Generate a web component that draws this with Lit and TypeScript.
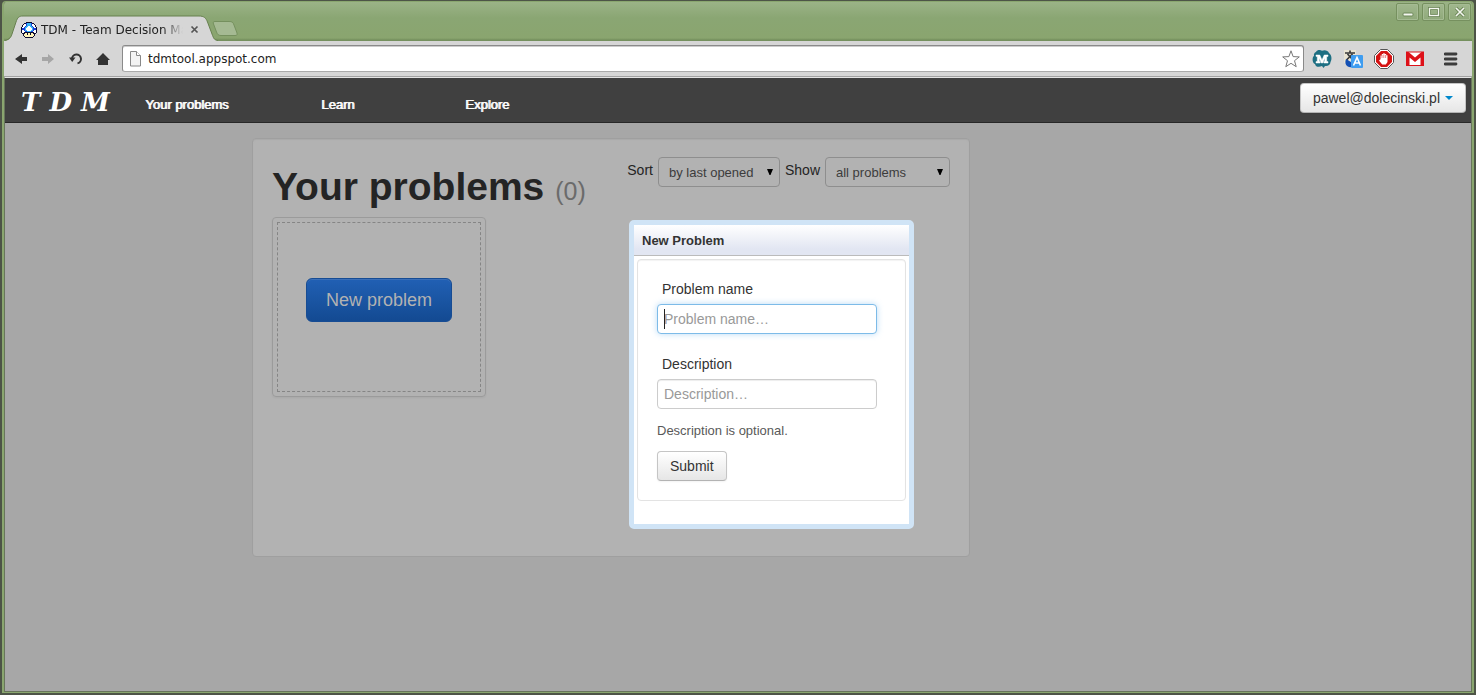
import { LitElement, html, css, svg } from "lit";
import { customElement } from "lit/decorators.js";

const MUSHROOM = [
  ".....KKKKKK.....",
  "...KKBCCCCBKK...",
  "..KWWBCCCCBWWK..",
  ".KWWWBCCCCBWWWK.",
  ".KWWBCCWWCCBWWK.",
  "KWWBCCWWWWCCBWWK",
  "KBBBCWWWWWWCBBBK",
  "KBBBCWWWWWWCBBBK",
  "KWWBCCWWWWCCBWWK",
  "KWWWBBCCCCBBWWWK",
  "KWWKKKKKKKKKKWWK",
  ".KKKYYKYYKYYKKK.",
  "..KYYYKYYKYYYK..",
  "..KYYYYYYYYYYK..",
  "...KYYYYYYYYK...",
  "....KKKKKKKK....",
];
const MUSHROOM_COLORS: Record<string, string> = {
  K: "#0c0c30",
  B: "#1a3cd8",
  C: "#35b4f4",
  W: "#ffffff",
  Y: "#fdf3b8",
};

@customElement("browser-chrome")
class BrowserChrome extends LitElement {
  static styles = css`
    :host {
      display: block;
      font: 12px/18px "DejaVu Sans", sans-serif;
      color: #222;
    }
    button {
      font: inherit;
      border: 0;
      padding: 0;
      margin: 0;
      background: none;
      display: grid;
      place-items: center;
    }
    svg { display: block; }
    .titlebar {
      height: 38px;
      display: flex;
      align-items: flex-start;
      justify-content: space-between;
      padding: 0 1px 0 2px;
      background: linear-gradient(#9bb387, #8aa673 16px, #8aa56f 36px, #75905e);
    }
    .tabs { display: flex; padding-top: 13px; }
    .tab { display: grid; grid-template-columns: 100%; width: 207px; height: 26px; }
    .tab > * { grid-area: 1 / 1; }
    .tab-row { display: flex; align-items: center; gap: 4px; padding: 3px 14px 0 15px; }
    .tab-title {
      flex: 1;
      min-width: 0;
      height: 18px;
      overflow: hidden;
      white-space: nowrap;
      mask-image: linear-gradient(90deg, #000 122px, transparent 142px);
    }
    .new-tab { padding-top: 5px; margin-left: -1px; align-self: flex-start; }
    .win { display: flex; gap: 3px; padding-top: 1px; }
    .win button {
      width: 23px;
      height: 18px;
      border: 1px solid #76905f;
      border-radius: 2px;
      background: linear-gradient(#a1b88e, #8fa97a);
      box-shadow: inset 0 0 0 1px #a5bb93;
    }
    .toolbar {
      height: 35px;
      display: flex;
      align-items: center;
      padding: 0 13px 0 10px;
      border-top: 1px solid #75905e;
      background: #d6d6d6;
      border-bottom: 1px solid #a2a2a2;
    }
    .tools { display: flex; gap: 11px; margin-right: 11px; }
    .tools button { width: 16px; height: 16px; }
    .address {
      flex: 1;
      display: flex;
      align-items: center;
      gap: 6px;
      height: 25px;
      padding: 0 3px 0 6px;
      border: 1px solid #8a8a8a;
      border-bottom-color: #aaa;
      border-radius: 3px;
      background: #fff;
      box-shadow: inset 0 1px 0 #ccc;
    }
    .address input {
      flex: 1;
      min-width: 0;
      border: 0;
      padding: 0;
      outline: 0;
      background: none;
      font: inherit;
      color: #222;
    }
    .ext { display: flex; gap: 11px; margin-left: 8px; }
    .ext button { width: 20px; height: 20px; }
    .ext .menu { width: 16px; margin-left: 7px; }
  `;

  render() {
    return html`
      <div class="titlebar">
        <div class="tabs">
          <div class="tab">
            <svg width="212" height="26" viewBox="0 0 212 26" overflow="visible">
              <path d="M-1 26 C4 25 5 22 6 19 L10 7 C11.500 2.500 13 1 17 1 H193 C198 1 200 3 201.500 7 L206 19 C207.500 23 208 25 212 26 Z" fill="#d6d6d6" />
              <path d="M-1 25.500 C4 24 5 22 6 19 L10 7 C11.500 2.500 13 1 17 1 H193 C198 1 200 3 201.500 7 L206 19 C207.500 23 208 25 212 25.500" fill="none" stroke="#67804f" />
            </svg>
            <div class="tab-row">
              <svg width="16" height="16" viewBox="0 0 16 16" shape-rendering="crispEdges">
                ${MUSHROOM.flatMap((row, y) =>
                  [...row].map((c, x) =>
                    c === "." ? null : svg`<rect x=${x} y=${y} width="1" height="1" fill=${MUSHROOM_COLORS[c]} />`
                  )
                )}
              </svg>
              <span class="tab-title">TDM - Team Decision Making</span>
              <button aria-label="Close tab">
                <svg width="9" height="9" viewBox="0 0 9 9"><path d="M1.500 1.500 L7.500 7.500 M7.500 1.500 L1.500 7.500" stroke="#555" stroke-width="1.700" /></svg>
              </button>
            </div>
          </div>
          <button class="new-tab" aria-label="New tab">
            <svg width="27" height="17" viewBox="0 0 27 17">
              <path d="M3 1.500 H17 C20 1.500 21 2 22 5 L25 13 C25.500 15 25 15.500 23 15.500 H9 C6.500 15.500 5.500 14.500 4.500 12 L1.500 4 C1 2.500 1 1.500 3 1.500 Z" fill="#a5ba93" stroke="#75905e" />
            </svg>
          </button>
        </div>
        <div class="win">
          <button aria-label="Minimize">
            <svg width="12" height="12" viewBox="0 0 12 12"><rect x="1" y="7" width="10" height="3" rx="1" fill="#f4f7f0" stroke="#6d8759" /></svg>
          </button>
          <button aria-label="Maximize">
            <svg width="12" height="12" viewBox="0 0 12 12"><rect x="1.500" y="2.500" width="9" height="7" fill="none" stroke="#6d8759" stroke-width="3" /><rect x="1.500" y="2.500" width="9" height="7" fill="none" stroke="#f4f7f0" stroke-width="1.300" /></svg>
          </button>
          <button aria-label="Close">
            <svg width="12" height="12" viewBox="0 0 12 12"><path d="M2 2 L10 10 M10 2 L2 10" stroke="#6d8759" stroke-width="3.200" /><path d="M2 2 L10 10 M10 2 L2 10" stroke="#f4f7f0" stroke-width="1.600" /></svg>
          </button>
        </div>
      </div>
      <div class="toolbar">
        <div class="tools">
          <button aria-label="Back">
            <svg width="16" height="16" viewBox="0 0 16 16"><path d="M1 8 L8 3 V6 H13 V10 H8 V13 Z" fill="#333" /></svg>
          </button>
          <button aria-label="Forward">
            <svg width="16" height="16" viewBox="0 0 16 16"><path d="M13 8 L7 3 V6 H1 V10 H7 V13 Z" fill="#a6a6a6" /></svg>
          </button>
          <button aria-label="Reload">
            <svg width="16" height="16" viewBox="0 0 16 16"><path d="M4 8 A4.500 4.500 0 1 1 9.500 12.400" fill="none" stroke="#333" stroke-width="2" /><path d="M1 6.500 H7.500 L4.200 11 Z" fill="#333" /></svg>
          </button>
          <button aria-label="Home">
            <svg width="16" height="16" viewBox="0 0 16 16"><path d="M8 2 L15 9 H13 V14 H3 V9 H1 Z" fill="#333" /></svg>
          </button>
        </div>
        <div class="address">
          <svg width="13" height="16" viewBox="0 0 13 16"><path d="M1.500 .5 H7.500 L11.500 4.500 V15 H1.500 Z" fill="#f3f3f3" stroke="#888" /><path d="M7.500 .5 V4.500 H11.500" fill="#fff" stroke="#888" /></svg>
          <input aria-label="Address" .value=${"tdmtool.appspot.com"} />
          <button aria-label="Bookmark this page">
            <svg width="18" height="18" viewBox="0 0 18 18"><path d="M9 .8 L11.100 6.600 L17.300 6.900 L12.500 10.700 L14.200 16.700 L9 13.300 L3.800 16.700 L5.500 10.700 L.7 6.900 L6.900 6.600 Z" fill="#fff" stroke="#777" stroke-linejoin="round" /></svg>
          </button>
        </div>
        <div class="ext">
          <button aria-label="Mindmap extension">
            <svg width="20" height="20" viewBox="0 0 20 20">
              <path d="M4 3 C5 1 8 .5 10 1.800 C12 .5 16 1 17 4 C20 6 20 11 18.500 13 C18.500 16 15.500 17.500 13 17 L11.500 19 L10 17 C7 18.500 3.500 18 3 15 C0 14 0 8 2 7 C1.500 5 2.500 3.500 4 3 Z" fill="#1d6f82" />
              <path d="M4 14 V12.600 H5.300 V7.400 H4 V6 H7.800 L10 11 L12.200 6 H16 V7.400 H14.700 V12.600 H16 V14 H11.800 V12.600 H12.700 V9 L10.700 14 H9.300 L7.300 9 V12.600 H8.200 V14 Z" fill="#fff" stroke="#fff" stroke-width=".5" />
            </svg>
          </button>
          <button aria-label="Translate">
            <svg width="20" height="20" viewBox="0 0 20 20">
              <path d="M1 1 H13 V14 H1 Z" fill="#e9e4d2" />
              <path d="M2 4 H12 M7 1.500 V4 M4.500 5 L10 11 M9.500 5 L3.500 11" stroke="#3a3a3a" stroke-width="1.700" fill="none" />
              <path d="M3 10 C1 15 4 19 9 18 L8 13 Z" fill="#1450b4" />
              <rect x="8" y="6" width="12" height="13" rx="1" fill="#3f9df0" />
              <path d="M10.500 16.500 L14 8.500 L17.500 16.500 M11.800 14 H16.200" stroke="#fff" stroke-width="1.600" fill="none" />
            </svg>
          </button>
          <button aria-label="Ad blocker">
            <svg width="20" height="20" viewBox="0 0 20 20">
              <path d="M6.500 .5 H13.500 L19.500 6.500 V13.500 L13.500 19.500 H6.500 L.5 13.500 V6.500 Z" fill="#fff" stroke="#555" />
              <path d="M7 2 H13 L18 7 V13 L13 18 H7 L2 13 V7 Z" fill="#d51313" />
              <path d="M6.500 8 V6.500 H7.800 V5 H9.200 V4.300 H10.700 V5 H12.200 V6.200 H13.500 V13 L11.800 15.500 H8.200 L5 11.500 L6.500 10.300 Z" fill="#fff" />
              <path d="M8 6 V9 M9.800 5.500 V9 M11.600 6 V9" stroke="#d51313" stroke-width=".5" />
            </svg>
          </button>
          <button aria-label="Mail">
            <svg width="20" height="20" viewBox="0 0 20 20">
              <rect x="1" y="3" width="18" height="14" fill="#fff" />
              <path d="M1 3 H3.500 L10 8.500 L16.500 3 H19 V17 H15.500 V8.500 L10 13 L4.500 8.500 V17 H1 Z" fill="#dd1119" />
              <path d="M1 3 H19 M1 16.500 H19" stroke="#dd1119" />
            </svg>
          </button>
          <button class="menu" aria-label="Browser menu">
            <svg width="14" height="14" viewBox="0 0 14 14"><path d="M1 2 H12 M1 7 H12 M1 12 H12" stroke="#3c3c3c" stroke-width="2.800" stroke-linecap="round" /></svg>
          </button>
        </div>
      </div>
    `;
  }
}

@customElement("app-root")
class AppRoot extends LitElement {
  static styles = css`
    :host {
      display: flex;
      flex-direction: column;
      box-sizing: border-box;
      min-height: 100vh;
      padding: 1px 2px 2px;
      background: #4d5447;
      font: 14px/20px "Liberation Sans", Arial, sans-serif;
      color: #333;
    }
    button, input, select { font: inherit; margin: 0; }
    .window {
      flex: 1;
      display: flex;
      flex-direction: column;
      border: solid #8aa66f;
      border-width: 1px 2px;
      border-radius: 4px 4px 0 0;
      overflow: hidden;
    }
    .page {
      flex: 1;
      position: relative;
      border: 1px solid #68755c;
      border-top: 1px solid #e4e4e4;
      background: #a7a7a7;
    }
    .navbar {
      display: flex;
      align-items: center;
      height: 44px;
      padding: 0 5px 0 16px;
      background: #404040;
      border-bottom: 1px solid #282828;
    }
    .brand {
      width: 124px;
      padding-top: 4px;
      font: italic bold 26px/40px "DejaVu Serif", serif;
      color: #fff;
      text-decoration: none;
      white-space: pre;
    }
    .nav {
      flex: 1;
      display: grid;
      grid-template-columns: 176px 144px auto;
      justify-content: start;
      padding-top: 9px;
      font-size: 13px;
    }
    .nav a { color: #fff; text-decoration: none; text-shadow: 1px 0 0 #fff; }
    .btn {
      border: 1px solid #c5c5c5;
      border-bottom-color: #b3b3b3;
      border-radius: 4px;
      height: 30px;
      padding: 0 12px;
      background: linear-gradient(#fff, #e6e6e6);
      color: #333;
      box-shadow: 0 1px 2px rgba(0, 0, 0, 0.05);
    }
    .account { display: flex; align-items: center; gap: 5px; margin-bottom: 4px; }
    .container { max-width: 972px; margin: 0 auto; padding-top: 15px; }
    .well {
      box-sizing: border-box;
      max-width: 718px;
      min-height: 419px;
      padding: 18px 19px;
      border: 1px solid #9f9f9f;
      border-radius: 4px;
      background: #b2b2b2;
      box-shadow: inset 0 1px 1px #a9a9a9;
    }
    .head { display: flex; justify-content: space-between; align-items: flex-start; height: 60px; }
    h1 { margin: 10px 0 0; font-size: 39px; line-height: 40px; color: #242424; white-space: nowrap; }
    h1 small { font-size: 25px; font-weight: normal; color: #6b6b6b; }
    .filters { display: flex; gap: 5px; color: #242424; line-height: 26px; }
    .pick { display: grid; align-items: center; }
    .pick > * { grid-area: 1 / 1; }
    .pick svg { justify-self: end; margin-right: 6px; pointer-events: none; }
    select {
      appearance: none;
      box-sizing: border-box;
      height: 30px;
      padding: 2px 10px 0;
      border: 1px solid #8e8e8e;
      border-radius: 4px;
      background: #b2b2b2;
      color: #3c3c3c;
      font-size: 13px;
    }
    .sort { width: 122px; }
    .show { width: 125px; }
    .tile {
      box-sizing: border-box;
      width: 214px;
      height: 180px;
      padding: 4px;
      border: 1px solid #9b9b9b;
      border-radius: 4px;
      box-shadow: 0 1px 2px rgba(0, 0, 0, 0.05);
    }
    .slot {
      box-sizing: border-box;
      height: 100%;
      border: 1px dashed #858585;
      padding-top: 55px;
      display: flex;
      justify-content: center;
      align-items: flex-start;
    }
    .primary {
      height: 44px;
      padding: 0 19px;
      border: 1px solid #174c93;
      border-radius: 6px;
      background: linear-gradient(#2160b4, #134a92);
      box-shadow: inset 0 1px 0 #3a6fb8;
      color: #b2b2b2;
      font-size: 18px;
    }
    .dialog {
      position: absolute;
      top: 142px;
      left: calc(50% - 109px);
      width: 275px;
      padding-bottom: 23px;
      border: 5px solid #d0e4f6;
      border-radius: 5px;
      background: #fff;
    }
    h2 {
      margin: 0 0 3px;
      padding: 6px 8px 4px;
      font-size: 13px;
      line-height: 20px;
      color: #333;
      background: linear-gradient(#fff, #e2e6f2 80%);
      border-bottom: 1px solid #bbb;
    }
    form {
      margin: 0 3px;
      padding: 19px;
      border: 1px solid #e3e3e3;
      border-radius: 4px;
      box-shadow: inset 0 1px 1px rgba(0, 0, 0, 0.05);
    }
    label.caption { display: block; margin: 0 5px 5px; }
    .field { position: relative; margin-bottom: 20px; }
    .field input {
      display: block;
      box-sizing: border-box;
      width: 220px;
      height: 30px;
      padding: 4px 6px;
      border: 1px solid #ccc;
      border-radius: 4px;
      background: #fff;
      box-shadow: inset 0 1px 1px rgba(0, 0, 0, 0.075);
      outline: 0;
    }
    .field input::placeholder { color: #999; }
    .field .active { border-color: #7dbbe8; box-shadow: 0 0 6px rgba(82, 168, 236, 0.4); }
    .caret { position: absolute; left: 7px; top: 30px; width: 1px; height: 20px; background: #222; }
    .last { margin-bottom: 12px; }
    .help { margin: 0 0 10px; font-size: 13px; color: #595959; }
    .submit { display: block; }
  `;

  render() {
    const arrow = html`<svg width="8" height="8" viewBox="0 0 8 8"><path d="M1 1 H7 L4.500 7 H3.500 Z" fill="#000" /></svg>`;
    return html`
      <div class="window">
        <browser-chrome></browser-chrome>
        <div class="page">
          <header class="navbar">
            <a class="brand" href="#">T D M</a>
            <nav class="nav">
              <a href="#problems">Your problems</a>
              <a href="#learn">Learn</a>
              <a href="#explore">Explore</a>
            </nav>
            <button class="btn account">
              pawel@dolecinski.pl
              <svg width="8" height="4" viewBox="0 0 8 4"><path d="M0 0 H8 L4 4 Z" fill="#0088cc" /></svg>
            </button>
          </header>
          <main class="container">
            <section class="well">
              <div class="head">
                <h1>Your problems <small>(0)</small></h1>
                <div class="filters">
                  <label for="sort">Sort</label>
                  <div class="pick">
                    <select id="sort" class="sort"><option>by last opened</option></select>
                    ${arrow}
                  </div>
                  <label for="show">Show</label>
                  <div class="pick">
                    <select id="show" class="show"><option>all problems</option></select>
                    ${arrow}
                  </div>
                </div>
              </div>
              <div class="tile"><div class="slot"><button class="primary">New problem</button></div></div>
            </section>
          </main>
          <div class="dialog" role="dialog" aria-labelledby="dialog-title">
            <h2 id="dialog-title">New Problem</h2>
            <form @submit=${(e: Event) => e.preventDefault()}>
              <div class="field">
                <label class="caption" for="name">Problem name</label>
                <input id="name" class="active" placeholder="Problem name…" />
                <span class="caret"></span>
              </div>
              <div class="field last">
                <label class="caption" for="description">Description</label>
                <input id="description" placeholder="Description…" />
              </div>
              <p class="help">Description is optional.</p>
              <button class="btn submit">Submit</button>
            </form>
          </div>
        </div>
      </div>
    `;
  }
}
